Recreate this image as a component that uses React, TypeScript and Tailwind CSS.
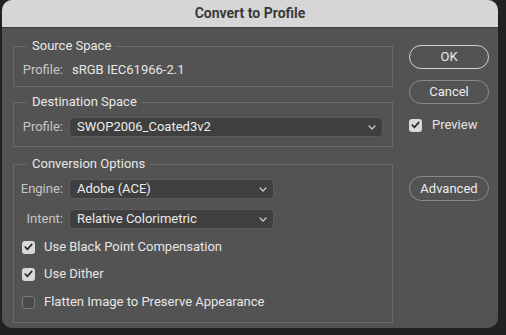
import React from "react";

const font = { fontFamily: "Roboto, 'Noto Sans', sans-serif" };

function Chevron() {
  return (
    <svg width="8" height="5" viewBox="0 0 8 5" className="shrink-0">
      <path d="M1 1 L4 4 L7 1" fill="none" stroke="#d0d0d0" strokeWidth="1.2" strokeLinecap="round" strokeLinejoin="round" />
    </svg>
  );
}

function Select({ value, width }: { value: string; width: string }) {
  return (
    <div className={`flex items-center justify-between h-[20px] ${width} rounded-[4px] bg-[#3f3f3f] border border-[#5c5c5c] pl-[7px] pr-[6px] text-[13px] text-[#ececec]`}>
      <span>{value}</span>
      <Chevron />
    </div>
  );
}

function Check({ checked }: { checked: boolean }) {
  return checked ? (
    <div className="w-[13px] h-[13px] rounded-[3px] bg-[#d9d9d9] flex items-center justify-center shrink-0">
      <svg width="9" height="8" viewBox="0 0 9 8">
        <path d="M1.3 4.2 L3.5 6.3 L7.7 1.4" fill="none" stroke="#2a2a2a" strokeWidth="1.7" strokeLinecap="round" strokeLinejoin="round" />
      </svg>
    </div>
  ) : (
    <div className="w-[13px] h-[13px] rounded-[3px] bg-[#4a4a4a] border border-[#7a7a7a] shrink-0" />
  );
}

function Group({ title, children, className = "" }: { title: string; children: React.ReactNode; className?: string }) {
  return (
    <fieldset className={`border border-[#6a6a6a] px-0 ${className}`}>
      <legend className="ml-[13px] px-[5px] text-[13px] leading-[16px] text-[#e8e8e8]">{title}</legend>
      {children}
    </fieldset>
  );
}

function Label({ children }: { children: React.ReactNode }) {
  return <div className="w-[49px] text-right text-[13px] text-[#c6c6c6] shrink-0">{children}</div>;
}

function CheckRow({ checked, label }: { checked: boolean; label: string }) {
  return (
    <div className="flex items-center h-[20px] pl-[8px] gap-[9px] text-[13px] text-[#e6e6e6]">
      <Check checked={checked} />
      <span>{label}</span>
    </div>
  );
}

function Btn({ children, primary = false, h = "h-[24px]" }: { children: React.ReactNode; primary?: boolean; h?: string }) {
  return (
    <div className={`w-[80px] ${h} rounded-full border ${primary ? "border-[#d2d2d2]" : "border-[#8a8a8a]"} flex items-center justify-center text-[13px] text-[#ececec]`}>
      {children}
    </div>
  );
}

export default function App() {
  return (
    <div className="w-[506px] h-[335px] bg-[#222222] pl-[2px] overflow-hidden" style={font}>
      <div className="w-[496px] h-[328px] rounded-[10px] bg-[#535353] overflow-hidden flex flex-col">
        <div className="h-[28px] bg-[#d6d6d6] border-b border-[#3c3c3c] flex items-center justify-center text-[14px] font-bold text-[#3a3a3a] shrink-0">
          Convert to Profile
        </div>
        <div className="flex flex-1">
          <div className="w-[380px] ml-[11px] pt-[10px] flex flex-col">
            <Group title="Source Space" className="pt-[6px] pb-[6px]">
              <div className="flex items-center h-[20px] gap-[9px]">
                <Label>Profile:</Label>
                <span className="text-[13px] text-[#e6e6e6]">sRGB IEC61966-2.1</span>
              </div>
            </Group>
            <Group title="Destination Space" className="mt-[7px] pt-[7px] pb-[9px]">
              <div className="flex items-center gap-[6px]">
                <Label>Profile:</Label>
                <Select value="SWOP2006_Coated3v2" width="w-[314px]" />
              </div>
            </Group>
            <Group title="Conversion Options" className="mt-[9px] pt-[7px] pb-[10px]">
              <div className="flex flex-col gap-[10px]">
                <div className="flex items-center gap-[6px]">
                  <Label>Engine:</Label>
                  <Select value="Adobe (ACE)" width="w-[205px]" />
                </div>
                <div className="flex items-center gap-[6px]">
                  <Label>Intent:</Label>
                  <Select value="Relative Colorimetric" width="w-[205px]" />
                </div>
              </div>
              <div className="flex flex-col mt-[8px]">
                <CheckRow checked label="Use Black Point Compensation" />
                <div className="mt-[7px]">
                  <CheckRow checked label="Use Dither" />
                </div>
                <div className="mt-[8px]">
                  <CheckRow checked={false} label="Flatten Image to Preserve Appearance" />
                </div>
              </div>
            </Group>
          </div>
          <div className="ml-[16px] pt-[17px] flex flex-col">
            <Btn primary>OK</Btn>
            <div className="mt-[11px]">
              <Btn>Cancel</Btn>
            </div>
            <div className="mt-[11px] h-[20px] flex items-center gap-[10px] text-[13px] text-[#e6e6e6]">
              <Check checked />
              <span>Preview</span>
            </div>
            <div className="mt-[41px]">
              <Btn h="h-[25px]">Advanced</Btn>
            </div>
          </div>
        </div>
      </div>
    </div>
  );
}
